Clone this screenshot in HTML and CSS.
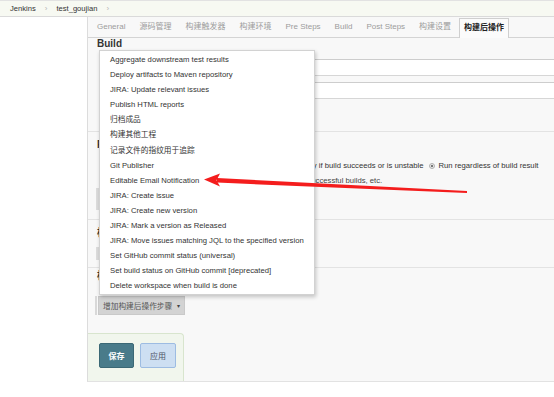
FILE: index.html
```html
<!DOCTYPE html>
<html lang="zh-CN">
<head>
    <meta charset="UTF-8">
    <title>test_goujian Config [Jenkins]</title>
    <link rel="stylesheet" href="styles.css">
</head>
<body>
    <div class="breadcrumbs">
        <span class="crumb">Jenkins</span>
        <span class="crumb-sep">›</span>
        <span class="crumb">test_goujian</span>
        <span class="crumb-sep">›</span>
    </div>

    <div class="page">
        <div class="side"></div>
        <div class="panel">
            <div class="tabs">
                <span class="tab">General</span>
                <span class="tab">源码管理</span>
                <span class="tab">构建触发器</span>
                <span class="tab">构建环境</span>
                <span class="tab">Pre Steps</span>
                <span class="tab">Build</span>
                <span class="tab">Post Steps</span>
                <span class="tab">构建设置</span>
                <span class="tab active">构建后操作</span>
            </div>

            <div class="section section-build">
                <h2 class="section-title">Build</h2>
                <div class="field-row first">
                    <div class="text-input"></div>
                </div>
                <div class="field-row">
                    <div class="text-input"></div>
                </div>
            </div>

            <div class="section section-post">
                <h2 class="section-title">Post Steps</h2>
                <div class="radio-row">
                    <span class="radio-option"><span class="radio"></span>Run only if build succeeds</span>
                    <span class="radio-option"><span class="radio"></span>Run only if build succeeds or is unstable</span>
                    <span class="radio-option"><span class="radio checked"></span>Run regardless of build result</span>
                </div>
                <div class="help-line">Should the post-build steps run only for successful builds, etc.</div>
                <div class="step-bar"></div>
            </div>

            <div class="section section-settings">
                <h2 class="section-title">构建设置</h2>
                <div class="step-bar short"></div>
            </div>

            <div class="section section-publishers">
                <h2 class="section-title">构建后操作</h2>
                <div class="add-wrap">
                    <button class="add-step">增加构建后操作步骤 <span class="caret">▾</span></button>
                </div>
            </div>

            <div class="bottom-bar">
                <button class="btn btn-save">保存</button>
                <button class="btn btn-apply">应用</button>
            </div>
        </div>
    </div>

    <!-- dropdown of the "add post-build step" button -->
    <div class="menu">
        <div class="menu-item">Aggregate downstream test results</div>
        <div class="menu-item">Deploy artifacts to Maven repository</div>
        <div class="menu-item">JIRA: Update relevant issues</div>
        <div class="menu-item">Publish HTML reports</div>
        <div class="menu-item">归档成品</div>
        <div class="menu-item">构建其他工程</div>
        <div class="menu-item">记录文件的指纹用于追踪</div>
        <div class="menu-item">Git Publisher</div>
        <div class="menu-item">Editable Email Notification</div>
        <div class="menu-item">JIRA: Create issue</div>
        <div class="menu-item">JIRA: Create new version</div>
        <div class="menu-item">JIRA: Mark a version as Released</div>
        <div class="menu-item">JIRA: Move issues matching JQL to the specified version</div>
        <div class="menu-item">Set GitHub commit status (universal)</div>
        <div class="menu-item">Set build status on GitHub commit [deprecated]</div>
        <div class="menu-item">Delete workspace when build is done</div>
    </div>

    <svg class="annotation" width="554" height="397" viewBox="0 0 554 397">
        <polygon points="217,178 467,191 467,193 217,182.6" fill="#f41d1d"/>
        <polygon points="204,179.6 220,173.6 216.5,180.3 220,186.6" fill="#f41d1d"/>
    </svg>
</body>
</html>
```

FILE: styles.css
```css
* {
    margin: 0;
    padding: 0;
    box-sizing: border-box;
}

body {
    width: 554px;
    height: 397px;
    overflow: hidden;
    position: relative;
    background-color: #fff;
    font-family: "Liberation Sans", Arial, "Noto Sans CJK SC", sans-serif;
    font-size: 7.7px;
    color: #333;
}

/* breadcrumb bar */
.breadcrumbs {
    height: 17px;
    display: flex;
    align-items: center;
    padding-left: 10px;
    background-color: #f7f9f2;
    border-top: 1px solid #e2e2e2;
    border-bottom: 1px solid #dadada;
    font-size: 7.6px;
}

.crumb-sep {
    color: #b8b8b8;
    margin: 0 9px;
    font-size: 8px;
}

.page {
    display: flex;
}

.side {
    width: 87px;
    flex: none;
}

.panel {
    flex: 1;
    min-width: 0;
    overflow: hidden;
    background-color: #f8f8f8;
    border-left: 1px solid #dcdcdc;
    border-bottom: 1px solid #e2e2e2;
}

/* tabs */
.tabs {
    display: flex;
    height: 21px;
    padding-left: 2px;
    border-bottom: 1px solid #d4d4d4;
    font-size: 8px;
}

.tab {
    padding: 0 7px;
    line-height: 20px;
    color: #9c9c9c;
    white-space: nowrap;
}

.tab.active {
    height: 20px;
    margin: 1px 0 -1px 1px;
    padding: 0 4px;
    line-height: 18px;
    background-color: #fbfbfb;
    border: 1px solid #cfcfcf;
    border-bottom: none;
    color: #222;
    font-weight: bold;
}

/* config sections */
.section {
    padding-left: 9px;
    border-bottom: 1px solid #e3e3e3;
}

.section-title {
    font-size: 10px;
    font-weight: bold;
    line-height: 12px;
    color: #333;
}

.section-build {
    padding-bottom: 32px;
}

.field-row {
    display: flex;
    align-items: center;
    height: 17px;
    margin-top: 6px;
    padding-left: 71px;
}

.field-row.first {
    margin-top: 9px;
}

.text-input {
    width: 420px;
    height: 17px;
    flex: none;
    background-color: #fff;
    border: 1px solid #d6d6d6;
    border-top-color: #cdcdcd;
}

.section-post {
    padding-top: 7px;
    padding-bottom: 9px;
}

.radio-row {
    display: flex;
    align-items: center;
    margin-top: 9px;
    padding-left: 76px;
    line-height: 12px;
    white-space: nowrap;
}

.radio-option {
    display: flex;
    align-items: center;
    gap: 3px;
    margin-right: 6px;
}

.radio {
    width: 6px;
    height: 6px;
    border-radius: 50%;
    border: 1px solid #b0b0b0;
    background-color: #ececec;
}

.radio.checked {
    background: radial-gradient(circle, #777 0, #777 1px, #e8e8e8 1.5px);
}

.help-line {
    margin-top: 3px;
    padding-left: 75px;
    line-height: 12px;
    color: #444;
    white-space: nowrap;
}

.step-bar {
    height: 22px;
    margin-top: 1px;
    margin-left: -1px;
    border-left: 3px solid #dcdcdc;
}

.section-settings {
    padding-top: 7px;
    padding-bottom: 7px;
}

.step-bar.short {
    height: 13px;
    margin-top: 8px;
}

.section-publishers {
    padding-top: 2px;
    border-bottom: none;
}

.add-wrap {
    height: 19px;
    margin-top: 14px;
    margin-left: -2px;
    padding-left: 1px;
    border-left: 2px solid #d8d8d8;
}

.add-step {
    width: 87px;
    height: 19px;
    display: flex;
    align-items: center;
    gap: 5px;
    padding-left: 4px;
    background-color: #d3d3d3;
    border: 1px solid #c9c9c9;
    font: inherit;
    color: #555;
}

.caret {
    font-size: 6px;
    color: #444;
}

/* save / apply */
.bottom-bar {
    width: 96px;
    height: 48px;
    margin-top: 18px;
    padding: 9px 0 0 11px;
    display: flex;
    align-items: flex-start;
    background-color: #f1f6ed;
    border-top: 1px solid #d8e5ce;
    border-right: 1px solid #d8e5ce;
    border-top-right-radius: 4px;
}

.btn {
    height: 25px;
    border-radius: 2px;
    font-family: inherit;
    font-size: 8px;
}

.btn-save {
    width: 35px;
    background-color: #497b8a;
    border: 1px solid #3b6875;
    color: #fff;
    font-weight: bold;
}

.btn-apply {
    width: 36px;
    margin-left: 6px;
    background-color: #cddff2;
    border: 1px solid #9dbce2;
    color: #4d5566;
}

/* dropdown menu */
.menu {
    position: absolute;
    left: 99px;
    top: 50px;
    width: 216px;
    height: 245px;
    padding-top: 1px;
    background-color: #fff;
    border: 1px solid #d2d2d2;
    box-shadow: 1px 2px 4px rgba(0, 0, 0, 0.22);
}

.menu-item {
    padding: 0 10px;
    line-height: 15.1px;
    white-space: nowrap;
    color: #333;
}

.annotation {
    position: absolute;
    left: 0;
    top: 0;
    pointer-events: none;
}
```
